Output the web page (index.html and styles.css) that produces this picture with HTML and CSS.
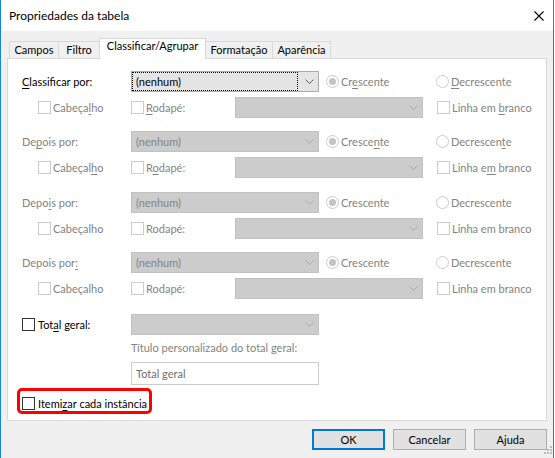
FILE: index.html
```html
<!DOCTYPE html>
<html lang="pt">
<head>
<meta charset="utf-8">
<title>Propriedades da tabela</title>
<link rel="stylesheet" href="styles.css">
</head>
<body>
<div class="window">
  <div class="titlebar">
    <span class="title">Propriedades da tabela</span>
    <svg class="close" width="10" height="10" viewBox="0 0 10 10"><path d="M0.5 0.5 L9.5 9.5 M9.5 0.5 L0.5 9.5" stroke="#000" stroke-width="1.1" fill="none"/></svg>
  </div>
  <div class="client">
    <div class="tabs">
      <div class="tab w1">Campos</div>
      <div class="tab w2">Filtro</div>
      <div class="tab w3 sel">Classificar/Agrupar</div>
      <div class="tab w4">Formatação</div>
      <div class="tab w5">Aparência</div>
    </div>
    <div class="panel">

      <div class="row">
        <div class="line line1">
          <span class="lbl"><u>C</u>lassificar por:</span>
          <div class="combo en"><span class="focus">(nenhum)</span><span class="arrow"><svg width="9" height="5" viewBox="0 0 9 5"><path d="M0.5 0.5 L4.5 4.5 L8.5 0.5" stroke="#606060" fill="none"/></svg></span></div>
          <span class="radio opt1 dis checked"><span class="circ"></span><span class="t">Cr<u>e</u>scente</span></span>
          <span class="radio dis"><span class="circ"></span><span class="t"><u>D</u>ecrescente</span></span>
        </div>
        <div class="line line2">
          <span class="chk dis c1"><span class="box"></span><span class="t">Cabeça<u>l</u>ho</span></span>
          <span class="chk dis c2"><span class="box"></span><span class="t"><u>R</u>odapé:</span></span>
          <div class="combo dis wide"><span class="txt"></span><span class="arrow"><svg width="9" height="5" viewBox="0 0 9 5"><path d="M0.5 0.5 L4.5 4.5 L8.5 0.5" stroke="#a8a8a8" fill="none"/></svg></span></div>
          <span class="chk dis c3"><span class="box"></span><span class="t">Linha em <u>b</u>ranco</span></span>
        </div>
      </div>

      <div class="row r2">
        <div class="line line1">
          <span class="lbl dtext">De<u>p</u>ois por:</span>
          <div class="combo dis"><span class="txt">(nenhum)</span><span class="arrow"><svg width="9" height="5" viewBox="0 0 9 5"><path d="M0.5 0.5 L4.5 4.5 L8.5 0.5" stroke="#a8a8a8" fill="none"/></svg></span></div>
          <span class="radio opt1 dis checked"><span class="circ"></span><span class="t">Cresce<u>n</u>te</span></span>
          <span class="radio dis"><span class="circ"></span><span class="t">Decrescen<u>t</u>e</span></span>
        </div>
        <div class="line line2">
          <span class="chk dis c1"><span class="box"></span><span class="t">Cabeçal<u>h</u>o</span></span>
          <span class="chk dis c2"><span class="box"></span><span class="t">R<u>o</u>dapé:</span></span>
          <div class="combo dis wide"><span class="txt"></span><span class="arrow"><svg width="9" height="5" viewBox="0 0 9 5"><path d="M0.5 0.5 L4.5 4.5 L8.5 0.5" stroke="#a8a8a8" fill="none"/></svg></span></div>
          <span class="chk dis c3"><span class="box"></span><span class="t">Linha e<u>m</u> branco</span></span>
        </div>
      </div>

      <div class="row r3">
        <div class="line line1">
          <span class="lbl dtext">Depo<u>i</u>s por:</span>
          <div class="combo dis"><span class="txt">(nenhum)</span><span class="arrow"><svg width="9" height="5" viewBox="0 0 9 5"><path d="M0.5 0.5 L4.5 4.5 L8.5 0.5" stroke="#a8a8a8" fill="none"/></svg></span></div>
          <span class="radio opt1 dis checked"><span class="circ"></span><span class="t">Crescente</span></span>
          <span class="radio dis"><span class="circ"></span><span class="t">Decrescente</span></span>
        </div>
        <div class="line line2">
          <span class="chk dis c1"><span class="box"></span><span class="t">Cabeçalho</span></span>
          <span class="chk dis c2"><span class="box"></span><span class="t">Rodapé:</span></span>
          <div class="combo dis wide"><span class="txt"></span><span class="arrow"><svg width="9" height="5" viewBox="0 0 9 5"><path d="M0.5 0.5 L4.5 4.5 L8.5 0.5" stroke="#a8a8a8" fill="none"/></svg></span></div>
          <span class="chk dis c3"><span class="box"></span><span class="t">Linha em branco</span></span>
        </div>
      </div>

      <div class="row r4">
        <div class="line line1">
          <span class="lbl dtext">Depois por<u>:</u></span>
          <div class="combo dis"><span class="txt">(nenhum)</span><span class="arrow"><svg width="9" height="5" viewBox="0 0 9 5"><path d="M0.5 0.5 L4.5 4.5 L8.5 0.5" stroke="#a8a8a8" fill="none"/></svg></span></div>
          <span class="radio opt1 dis checked"><span class="circ"></span><span class="t">Crescente</span></span>
          <span class="radio dis"><span class="circ"></span><span class="t">Decrescente</span></span>
        </div>
        <div class="line line2">
          <span class="chk dis c1"><span class="box"></span><span class="t">Cabeçalho</span></span>
          <span class="chk dis c2"><span class="box"></span><span class="t">Rodapé:</span></span>
          <div class="combo dis wide"><span class="txt"></span><span class="arrow"><svg width="9" height="5" viewBox="0 0 9 5"><path d="M0.5 0.5 L4.5 4.5 L8.5 0.5" stroke="#a8a8a8" fill="none"/></svg></span></div>
          <span class="chk dis c3"><span class="box"></span><span class="t">Linha em branco</span></span>
        </div>
      </div>

      <div class="line total">
        <span class="chk en tl"><span class="box"></span><span class="t">Tot<u>a</u>l geral:</span></span>
        <div class="combo dis"><span class="txt"></span><span class="arrow"><svg width="9" height="5" viewBox="0 0 9 5"><path d="M0.5 0.5 L4.5 4.5 L8.5 0.5" stroke="#a8a8a8" fill="none"/></svg></span></div>
      </div>
      <div class="ttl">Título personalizado do total geral:</div>
      <div class="textbox">Total geral</div>
      <div class="redbox">
        <span class="chk en"><span class="box"></span><span class="t">Itemi<u>z</u>ar cada instância</span></span>
      </div>
    </div>
    <div class="buttons">
      <div class="btn default">OK</div>
      <div class="btn">Cancelar</div>
      <div class="btn">Ajuda</div>
    </div>
  </div>
  <svg class="grip" width="9" height="9" viewBox="0 0 9 9">
    <rect x="6" y="0" width="2" height="2" fill="#bcbcbc"/>
    <rect x="3" y="3" width="2" height="2" fill="#bcbcbc"/>
    <rect x="6" y="3" width="2" height="2" fill="#bcbcbc"/>
    <rect x="0" y="6" width="2" height="2" fill="#bcbcbc"/>
    <rect x="3" y="6" width="2" height="2" fill="#bcbcbc"/>
    <rect x="6" y="6" width="2" height="2" fill="#bcbcbc"/>
  </svg>
</div>
</body>
</html>
```

FILE: styles.css
```css
* { box-sizing: border-box; }
html, body { margin: 0; padding: 0; background: #ffffff; }
body {
  font-family: Lato, "Segoe UI", "Noto Sans", sans-serif;
  font-size: 11px;
  color: #000;
}
u { text-decoration-thickness: 1px; text-underline-offset: 2px; }
.t { white-space: pre; }

.window {
  position: relative;
  width: 554px;
  height: 458px;
  border-left: 1px solid #1883d7;
  border-right: 1px solid #1883d7;
  display: flex;
  flex-direction: column;
}

.titlebar {
  height: 31px;
  flex: none;
  background: #fff;
  display: flex;
  align-items: center;
  justify-content: space-between;
  padding: 0 9px 0 8px;
}
.title { line-height: 15px; font-size: 12px; }
.close { display: block; }

.client {
  flex: 1;
  background: #f0f0f0;
  padding: 7px 6px 0 6px;
  display: flex;
  flex-direction: column;
}

.tabs {
  display: flex;
  align-items: flex-end;
  height: 20px;
  margin-left: 2px;
}
.tab {
  height: 17px;
  border: 1px solid #d9d9d9;
  border-bottom: none;
  margin-left: -1px;
  background: #f0f0f0;
  text-align: center;
  line-height: 13px;
  padding-top: 1px;
  white-space: nowrap;
}
.tab.w1 { margin-left: 0; width: 50px; }
.tab.w2 { width: 42px; }
.tab.w3 { width: 107px; }
.tab.w4 { width: 68px; }
.tab.w5 { width: 59px; }
.tab.sel {
  height: 21px;
  margin-bottom: -1px;
  background: #fff;
  position: relative;
  z-index: 1;
  padding-top: 0;
}

.panel {
  height: 363px;
  border: 1px solid #d9d9d9;
  background: #fff;
  padding-top: 12px;
  flex: none;
}

.row.r2 { margin-top: 13px; }
.row.r3 { margin-top: 14px; }
.row.r4 { margin-top: 13px; }

.line {
  display: flex;
  align-items: center;
  height: 21px;
  white-space: nowrap;
}
.line1 { padding-left: 14px; }
.line2 { padding-left: 30px; margin-top: 5px; }
.lbl { width: 109px; line-height: 15px; }
.dtext { color: #838383; }

.combo {
  width: 188px;
  height: 21px;
  border: 1px solid #acacac;
  display: flex;
  flex: none;
}
.combo.en { background: #e5e5e5; border-color: #acacac; }
.combo.dis { background: #cccccc; border-color: #c2c2c2; color: #838383; }
.combo.wide { width: 188px; }
.focus {
  flex: 1;
  border: 1px dotted #000;
  padding-left: 3px;
  line-height: 17px;
}
.combo .txt {
  flex: 1;
  padding-left: 4px;
  line-height: 19px;
}
.arrow {
  width: 20px;
  display: flex;
  align-items: center;
  justify-content: center;
  padding-left: 3px;
}
.arrow svg { display: block; }

.radio, .chk {
  display: flex;
  align-items: center;
  line-height: 15px;
}
.radio.dis, .chk.dis { color: #838383; }
.opt1 { margin-left: 7px; width: 110px; }
.circ {
  width: 13px;
  height: 13px;
  border: 1px solid #cccccc;
  border-radius: 50%;
  margin-right: 2px;
  background: #fff;
  display: flex;
  align-items: center;
  justify-content: center;
  flex: none;
}
.radio.checked .circ::after {
  content: "";
  width: 7px;
  height: 7px;
  border-radius: 50%;
  background: #c4c4c4;
}
.box {
  width: 13px;
  height: 13px;
  border: 1px solid #cccccc;
  background: #fff;
  margin-right: 2px;
  flex: none;
}
.chk.en .box { border-color: #333333; margin-right: 3px; }
.c1 { width: 93px; }
.c2 { width: 104px; }
.c3 { margin-left: 14px; }

.total { margin-top: 15px; padding-left: 14px; }
.tl { width: 109px; }

.ttl {
  margin: 5px 0 0 123px;
  line-height: 15px;
  color: #838383;
}
.textbox {
  margin: 7px 0 0 123px;
  width: 188px;
  height: 23px;
  border: 1px solid #cccccc;
  color: #6d6d6d;
  padding-left: 4px;
  line-height: 21px;
}

.redbox {
  margin: 3px 0 0 9px;
  width: 135px;
  height: 26px;
  border: 3px solid #ff0000;
  border-radius: 5px;
  padding: 4px 0 0 2px;
  display: flex;
  align-items: center;
  white-space: nowrap;
}

.buttons {
  display: flex;
  justify-content: flex-end;
  gap: 8px;
  margin-top: 8px;
}
.btn {
  width: 73px;
  height: 21px;
  border: 1px solid #adadad;
  background: #e1e1e1;
  display: flex;
  align-items: center;
  justify-content: center;
  line-height: 15px;
}
.btn.default { border: 2px solid #0078d7; }

.grip {
  position: absolute;
  right: 0;
  bottom: 3px;
  display: block;
}
```
